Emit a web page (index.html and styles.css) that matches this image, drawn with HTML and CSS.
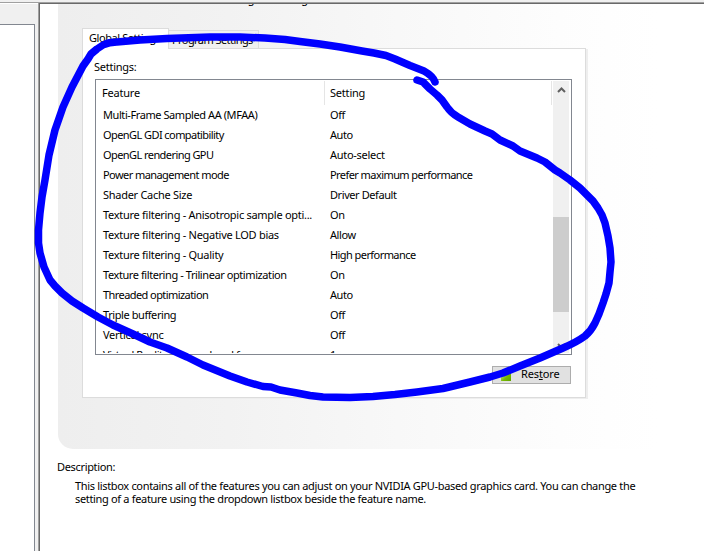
FILE: index.html
```html
<!DOCTYPE html>
<html lang="en">
<head>
<meta charset="utf-8">
<title>Manage 3D Settings</title>
<link rel="stylesheet" href="styles.css">
</head>
<body>
<div class="window">
  <aside class="sidebar"><div class="tree"></div></aside>
  <main class="content">
    <section class="panel">
      <div class="panel-title"><span>I would like to use the following 3D settings:</span></div>
      <div class="tabs">
        <div class="tab active">Global Settings</div>
        <div class="tab tight">Program Settings</div>
      </div>
      <div class="page">
        <div class="label">Settings:</div>
        <div class="list">
          <div class="table">
            <div class="row head"><span>Feature</span><span>Setting</span></div>
            <div class="row"><span>Multi-Frame Sampled AA (MFAA)</span><span>Off</span></div>
            <div class="row"><span class="tight">OpenGL GDI compatibility</span><span>Auto</span></div>
            <div class="row"><span class="tight">OpenGL rendering GPU</span><span class="loose">Auto-select</span></div>
            <div class="row"><span class="tight">Power management mode</span><span class="tight">Prefer maximum performance</span></div>
            <div class="row"><span class="loose">Shader Cache Size</span><span>Driver Default</span></div>
            <div class="row"><span class="loose">Texture filtering - Anisotropic sample opti...</span><span>On</span></div>
            <div class="row"><span class="loose">Texture filtering - Negative LOD bias</span><span>Allow</span></div>
            <div class="row"><span class="loose">Texture filtering - Quality</span><span class="tight">High performance</span></div>
            <div class="row"><span>Texture filtering - Trilinear optimization</span><span>On</span></div>
            <div class="row"><span class="tight">Threaded optimization</span><span>Auto</span></div>
            <div class="row"><span>Triple buffering</span><span>Off</span></div>
            <div class="row"><span class="loose">Vertical sync</span><span>Off</span></div>
            <div class="row"><span>Virtual Reality pre-rendered frames</span><span>1</span></div>
          </div>
          <div class="scrollbar">
            <svg width="9" height="6" viewBox="0 0 9 6"><path d="M1 5 4.500 1.500 8 5"/></svg>
            <div class="thumb"></div>
            <svg width="9" height="6" viewBox="0 0 9 6"><path d="M1 1 4.500 4.500 8 1"/></svg>
          </div>
        </div>
        <div class="actions"><button class="restore"><i class="logo"></i><span>Res<u>t</u>ore</span></button></div>
      </div>
    </section>
    <section class="description">
      <div class="desc-title">Description:</div>
      <p>This listbox contains all of the features you can adjust on your NVIDIA GPU-based graphics card. You can change the<br>setting of a feature using the dropdown listbox beside the feature name.</p>
    </section>
  </main>
</div>
<svg class="ink" width="704" height="551" viewBox="0 0 704 551"><path d="M435 82Q433 76 424 71L410 65.500 395 59 386 55.500 374 53 362 51 340 47 320 44 300 41.500 285 39.500 265 38 240 37 210 37 167 38.500 140 40 117 42 Q109 42 103 45L97 49 91 54 88 59 83 66 72 87 63 107 55 130 49 155 45 180 42 197 40 213 38.500 230 38.500 243 40 253 44 267 50 280 55 286 62 293 72 301 83 308 98 317 113 325 133 334 150 342 167 348 187 357 203 365 230 376 247 382 263 386.500 271 387 280 390 297 393 310 395.500 323 397 350 397.500 373 396.500 395 394.500 417 392 443 388.500 470 382 490 377 503 373 520 366 540 358 563 348Q577 342 585 336Q591 331 595 323L599 314 603 303 606 294 609 283 610 272 611 262 610 248 608 236 605 223 602 215 598 208 593 201 586 194 580 188 570 180 560 173 555 170 545 162 537 158 520 151 513 146 500 140 492 134 485 131 470 124 458 117Q451 113 447 107L442 100 437 95 430 89 423 82 417 80"/></svg>
</body>
</html>
```
FILE: styles.css
```css
* { box-sizing: border-box; }
body { margin: 0; background: #fff; color: #000; font: 11px/13px "Noto Sans", sans-serif; letter-spacing: -0.42px; }
.tight { letter-spacing: -0.57px; }
.loose { letter-spacing: -0.28px; }
.window { width: 704px; height: 551px; display: flex; overflow: hidden; padding-top: 2px; background: #f0f0f0; }
.sidebar { width: 38px; border-top: 1px solid #a0a0a0; padding-top: 21px; box-shadow: inset 0 1px #fff; }
.tree { width: 35px; height: 540px; background: #fff; border: 1px solid #828790; border-left: 0; }
.content { flex: 1; height: 549px; background: #fff; border-top: 1px solid #a0a0a0; border-left: 1px solid #a0a0a0; box-shadow: inset 1px 1px #696969; padding: 1px 0 0 19px; }
.panel { width: 630px; height: 445px; border-radius: 0 0 0 15px; background: linear-gradient(90deg, #eee 0, #f2f2f2 170px, #f8f8f8 340px, #fdfdfd 500px, #fff 600px); padding-left: 24px; }
.panel-title { height: 24px; overflow: hidden; padding-left: 15px; letter-spacing: -0.2px; }
.panel-title span { display: block; margin-top: -12px; }
.tabs { height: 20px; display: flex; align-items: flex-end; }
.tab { height: 18px; width: 91px; border: 1px solid #dcdcdc; border-bottom: 0; background: #f0f0f0; line-height: 18px; padding-left: 3px; white-space: nowrap; }
.tab.active { height: 21px; width: 87px; margin: 0 -1px -1px 0; background: #fff; padding-left: 6px; line-height: 17px; position: relative; }
.page { width: 504px; height: 350px; background: #fff; border: 1px solid #dcdcdc; box-shadow: 2px 1px #eee; padding: 11px 14px 0 12px; }
.label { height: 19px; margin-left: -1px; letter-spacing: -0.25px; }
.list { height: 276px; width: 477px; border: 1px solid #828790; display: flex; padding: 1px; }
.table { flex: 1; overflow: hidden; }
.row { height: 20px; display: grid; grid-template-columns: 228px 1fr; line-height: 20px; padding-left: 6px; white-space: nowrap; }
.row span + span { margin-left: -1px; }
.head { height: 24px; line-height: 24px; padding-left: 5px; border-right: 1px solid #e5e5e5; margin-right: 1px; letter-spacing: -0.2px; }
.head span:first-child { border-right: 1px solid #e5e5e5; margin-right: 5px; }
.head span + span { margin-left: 0; }
.scrollbar { width: 17px; background: #f0f0f0; border-right: 1px solid #fff; display: flex; flex-direction: column; align-items: center; padding: 6px 0 4px; }
.scrollbar path { fill: none; stroke: #606060; stroke-width: 2; }
.thumb { width: 16px; height: 95px; background: #cdcdcd; margin: 124px 0 auto; }
.actions { display: flex; justify-content: flex-end; padding-top: 11px; }
.restore { width: 79px; height: 18px; border: 1px solid #adadad; background: #e1e1e1; padding: 0 0 0 8px; display: flex; align-items: center; gap: 10px; font: inherit; color: inherit; letter-spacing: -0.15px; }
.restore span { margin-top: -3px; }
.logo { width: 10px; height: 10px; margin-top: 1px; background: linear-gradient(135deg, #dff0c0, #76b900 60%, #5ea000); }
.description { padding-top: 11px; margin-left: -1px; letter-spacing: -0.33px; }
.desc-title { height: 19px; }
.description p { margin: 0 0 0 18px; white-space: nowrap; }
.ink { position: absolute; left: 0; top: 0; z-index: 2; pointer-events: none; }
.ink path { fill: none; stroke: #00f; stroke-width: 7.500; stroke-linecap: round; stroke-linejoin: round; }
```
